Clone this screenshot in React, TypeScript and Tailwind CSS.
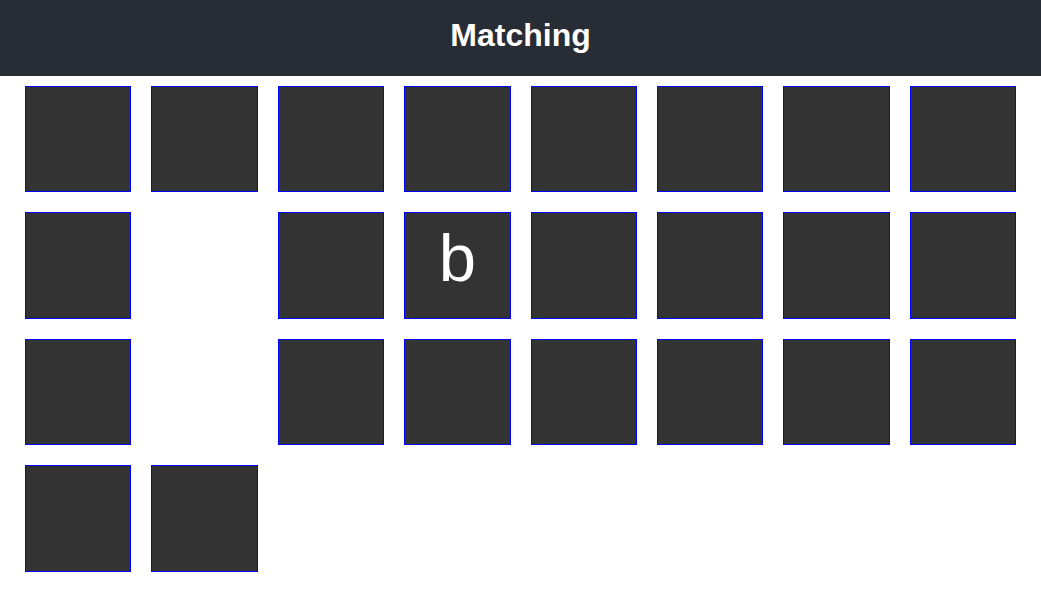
const cells: (string | null)[] = [
  "", "", "", "", "", "", "", "",
  "", null, "", "b", "", "", "", "",
  "", null, "", "", "", "", "", "",
  "", "",
];

export default function App() {
  return (
    <div className="min-h-screen bg-white font-['Liberation_Sans',Arial,sans-serif]">
      <header className="h-[76px] bg-[#282c34] flex items-center justify-center pb-[6px]">
        <h1 className="text-white text-[32px] font-bold">Matching</h1>
      </header>
      <div className="grid grid-cols-8 px-[15px]">
        {cells.map((c, i) => (
          <div key={i} className="p-[10px] aspect-square">
            {c !== null && (
              <div className="w-full h-full bg-[#333333] border border-[#0000ff] flex items-center justify-center text-white text-[67px] leading-none pb-[16px]">
                {c}
              </div>
            )}
          </div>
        ))}
      </div>
    </div>
  );
}
